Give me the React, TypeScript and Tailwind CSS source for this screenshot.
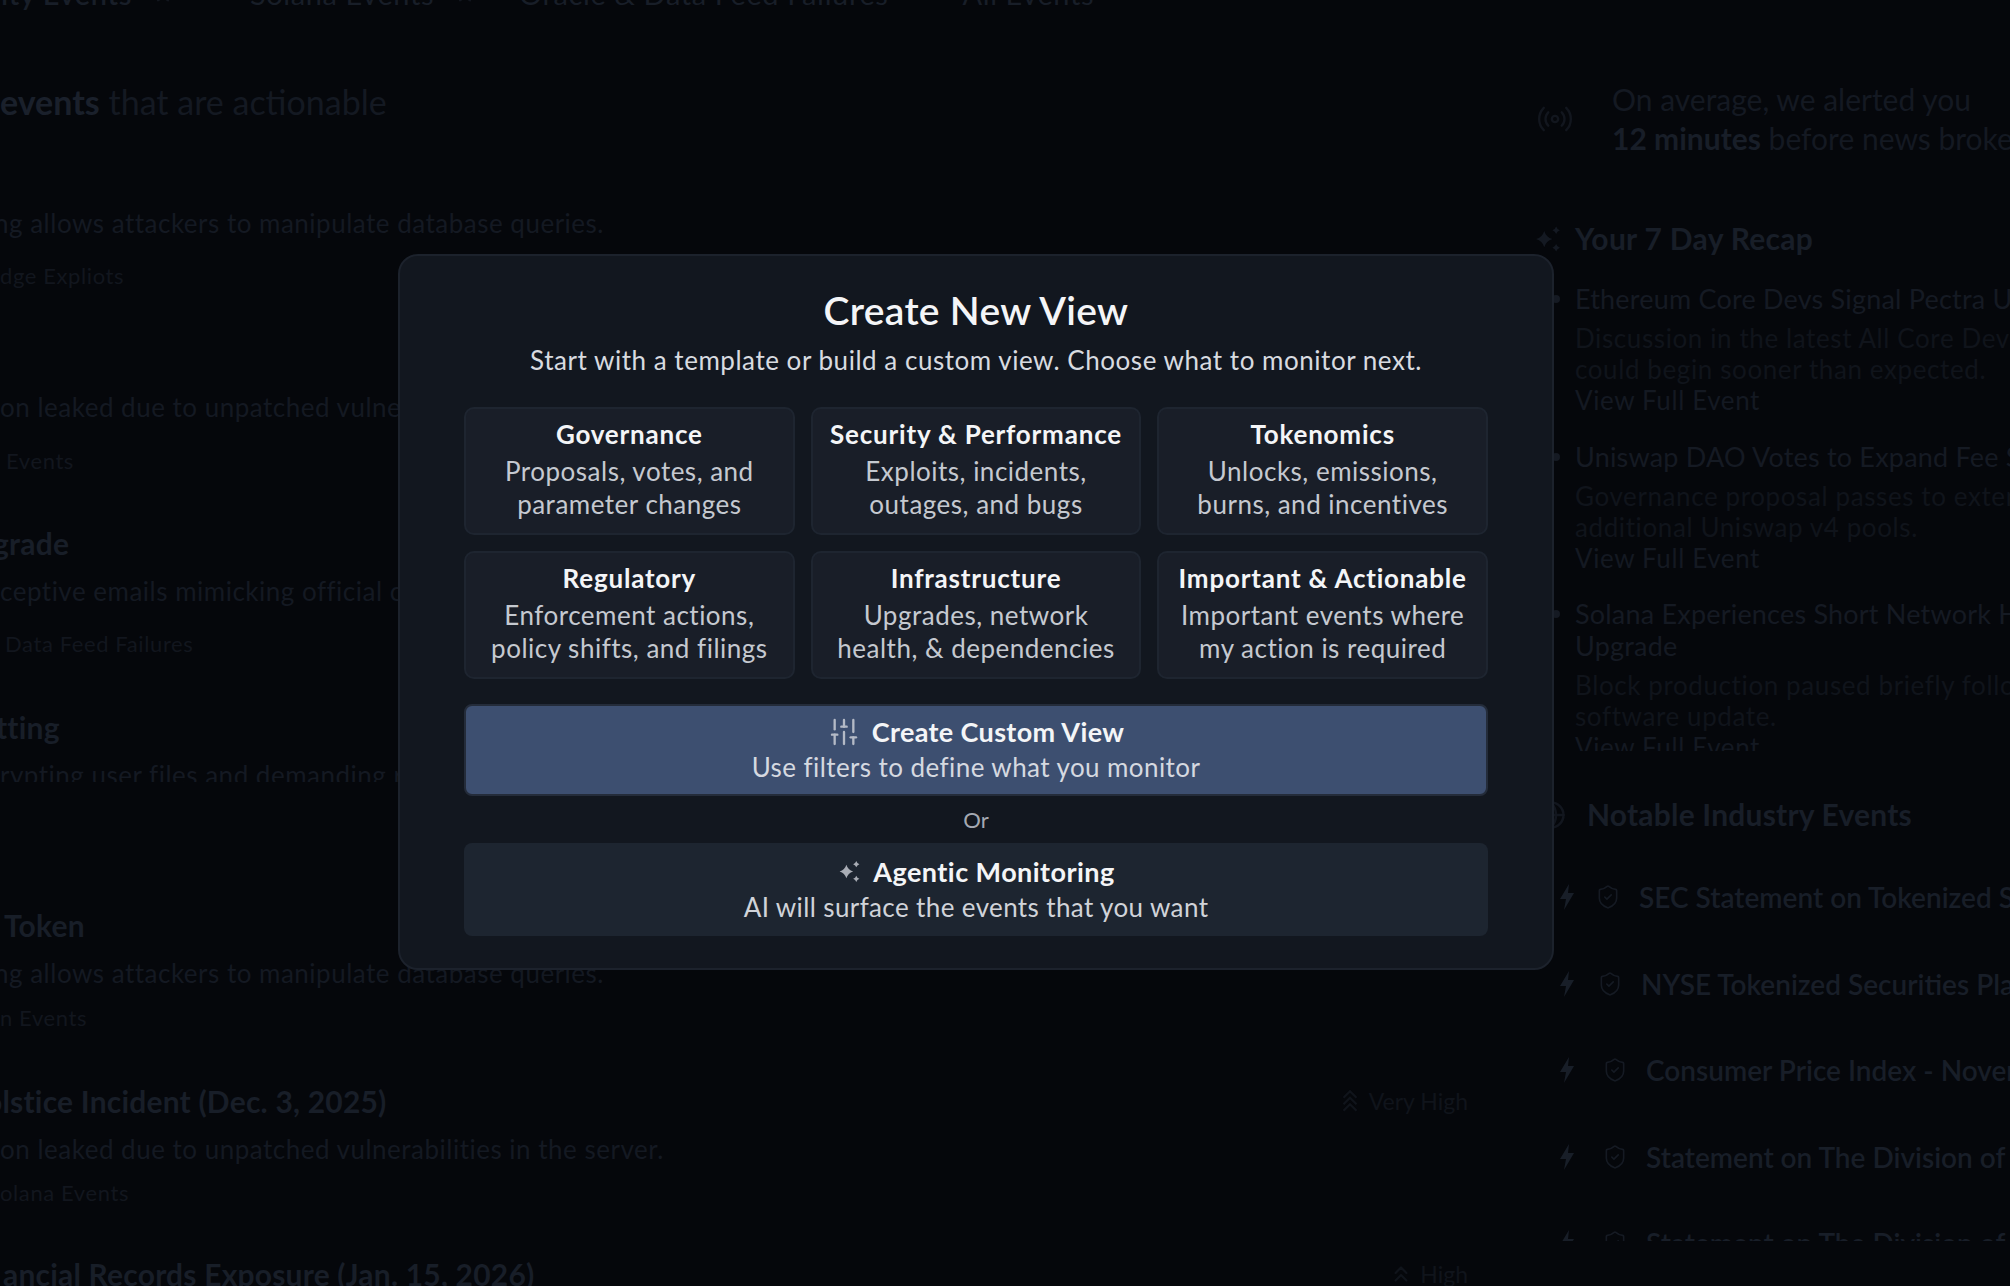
import { ChevronsUp, Globe, Radio, ShieldCheck, SlidersVertical, Bookmark, Plus } from "lucide-react";

function Sparkle({ className }: { className?: string }) {
  return (
    <svg viewBox="0 0 24 24" fill="currentColor" className={className}>
      <path d="M9 5.500Q10.500 10.500 15.500 12 10.500 13.500 9 18.500 7.500 13.500 2.500 12 7.500 10.500 9 5.500z" />
      <path d="M18.500 2Q19.200 4.300 21.500 5 19.200 5.700 18.500 8 17.800 5.700 15.500 5 17.800 4.300 18.500 2z" />
      <path d="M18.500 16Q19.200 18.300 21.500 19 19.200 19.700 18.500 22 17.800 19.700 15.500 19 17.800 18.300 18.500 16z" />
    </svg>
  );
}

function TripleChevron({ className }: { className?: string }) {
  return (
    <svg viewBox="0 0 24 24" fill="none" stroke="currentColor" strokeWidth="2" className={className}>
      <path d="M6 9l6-6 6 6M6 15l6-6 6 6M6 21l6-6 6 6" />
    </svg>
  );
}

function Bolt({ className }: { className?: string }) {
  return (
    <svg viewBox="0 0 14 26" fill="currentColor" className={className}>
      <path d="M9 0L0 15h6L4 26l10-17H8z" />
    </svg>
  );
}

const templates = [
  { title: "Governance", lines: ["Proposals, votes, and", "parameter changes"] },
  { title: "Security & Performance", lines: ["Exploits, incidents,", "outages, and bugs"] },
  { title: "Tokenomics", lines: ["Unlocks, emissions,", "burns, and incentives"] },
  { title: "Regulatory", lines: ["Enforcement actions,", "policy shifts, and filings"] },
  { title: "Infrastructure", lines: ["Upgrades, network", "health, & dependencies"] },
  { title: "Important & Actionable", lines: ["Important events where", "my action is required"] },
];

function EventRow({
  height,
  title,
  titleShift = "",
  desc,
  descShift = "",
  tag,
  tagShift = "mt-[21px]",
  severity,
  clampDesc,
}: {
  height: string;
  title?: string;
  titleShift?: string;
  desc: string;
  descShift?: string;
  tag?: string;
  tagShift?: string;
  severity?: React.ReactNode;
  clampDesc?: boolean;
}) {
  return (
    <div className={`flex flex-col shrink-0 ${height}`}>
      <div className="flex justify-between items-center h-[36px] pr-[42px]">
        <span className={`text-[30px] tracking-[0.2px] font-bold text-[#181e28] whitespace-nowrap ${titleShift}`}>{title}</span>
        {severity}
      </div>
      <div className={`mt-[12px] text-[26px] tracking-[0.5px] leading-[36px] text-[#141922] whitespace-nowrap ${descShift} ${clampDesc ? "h-[25px] overflow-hidden" : ""}`}>
        {desc}
      </div>
      {tag && (
        <div className={`text-[22px] tracking-[0.6px] leading-[28px] text-[#12161e] whitespace-nowrap ${tagShift}`}>{tag}</div>
      )}
    </div>
  );
}

function RecapItem({ title, body }: { title: string[]; body: string[] }) {
  return (
    <div className="flex flex-col">
      <div className="relative text-[27px] tracking-[0.2px] leading-[32px] text-[#151a23] whitespace-nowrap">
        <span className="absolute left-[-23px] top-[12px] w-[8px] h-[8px] rounded-full bg-[#151a23]" />
        {title.map((t) => (
          <div key={t}>{t}</div>
        ))}
      </div>
      <div className="mt-[8px] text-[26px] tracking-[0.6px] leading-[31px] text-[#10141b] whitespace-nowrap">
        {body.map((t) => (
          <div key={t}>{t}</div>
        ))}
      </div>
      <div className="text-[26px] tracking-[0.6px] leading-[30px] text-[#141922] whitespace-nowrap">View Full Event</div>
    </div>
  );
}

function NotableRow({ title, shieldGap }: { title: string; shieldGap: string }) {
  return (
    <div className="flex items-center h-[86.5px] shrink-0 text-[#181e28] whitespace-nowrap">
      <Bolt className="w-[14px] h-[26px] ml-[24px] shrink-0 text-[#181e28]" />
      <ShieldCheck className={`w-[26px] h-[26px] shrink-0 text-[#151a23] ${shieldGap}`} strokeWidth={1.5} />
      <span className="ml-[18px] text-[28px] font-semibold">{title}</span>
    </div>
  );
}

export default function App() {
  return (
    <div className="relative w-[2010px] h-[1286px] overflow-hidden bg-[#05070b] font-['Lato',sans-serif]">
      <div className="flex h-full">
        <div className="flex flex-col w-[1510px] shrink-0 overflow-hidden">
          <div className="flex items-center h-[36px] mt-[-24px] text-[29px] tracking-[0.6px] text-[#181e28] whitespace-nowrap">
            <span className="ml-[1px] font-semibold">ity Events</span>
            <Bookmark className="w-[18px] h-[18px] ml-[22px] shrink-0 text-[#12161e]" />
            <span className="ml-[78px]">Solana Events</span>
            <Bookmark className="w-[18px] h-[18px] ml-[22px] shrink-0 text-[#12161e]" />
            <span className="ml-[45px]">Oracle &amp; Data Feed Failures</span>
            <Plus className="w-[18px] h-[18px] ml-[22px] shrink-0 text-[#12161e]" />
            <span className="ml-[34px]">All Events</span>
          </div>
          <div className="mt-[70px] text-[34px] leading-[40px] text-[#141922] whitespace-nowrap">
            <span className="font-bold text-[#1a202b]">events</span> that are actionable
          </div>
          <div className="flex flex-col mt-[35px]">
            <EventRow height="h-[184px]" desc="ng allows attackers to manipulate database queries." descShift="ml-[-6px]" tag="dge Expliots" />
            <EventRow height="h-[184px]" desc="on leaked due to unpatched vulnerabilities in the server." tag="Events" tagShift="mt-[22px] ml-[6px]" />
            <EventRow height="h-[184px]" title="grade" titleShift="ml-[-7px]" desc="ceptive emails mimicking official communications." tag="Data Feed Failures" tagShift="mt-[21px] ml-[5px]" />
            <EventRow height="h-[198px]" title="tting" titleShift="ml-[-4px]" desc="rypting user files and demanding ransom." clampDesc />
            <EventRow height="h-[176px]" title="Token" titleShift="ml-[4px]" desc="ng allows attackers to manipulate database queries." descShift="ml-[-6px]" tag="n Events" tagShift="mt-[13px]" />
            <EventRow
              height="h-[173px]"
              title="olstice Incident (Dec. 3, 2025)"
              titleShift="ml-[-15px]"
              desc="on leaked due to unpatched vulnerabilities in the server."
              tag="olana Events"
              tagShift="mt-[12px]"
              severity={
                <span className="flex items-center gap-[6px] text-[23px] text-[#10141b]">
                  <TripleChevron className="w-[26px] h-[26px]" /> Very High
                </span>
              }
            />
            <EventRow
              height="h-[120px]"
              title="ancial Records Exposure (Jan. 15, 2026)"
              titleShift="ml-[3px]"
              desc=""
              severity={
                <span className="flex items-center gap-[6px] text-[23px] text-[#10141b]">
                  <ChevronsUp className="w-[26px] h-[26px]" /> High
                </span>
              }
            />
          </div>
        </div>

        <div className="flex flex-col flex-1 min-w-0 h-full overflow-hidden pt-[80px] pl-[26px]">
          <div className="flex items-center shrink-0">
            <Radio className="w-[38px] h-[38px] shrink-0 text-[#12161e]" strokeWidth={1.5} />
            <div className="ml-[38px] text-[30px] leading-[39px] text-[#141922] whitespace-nowrap">
              <div>On average, we alerted you</div>
              <div>
                <span className="font-bold text-[#181e28]">12 minutes</span> before news broke
              </div>
            </div>
          </div>
          <div className="flex items-center mt-[58px] shrink-0">
            <Sparkle className="w-[30px] h-[30px] shrink-0 text-[#141922] ml-[-3px]" />
            <span className="ml-[12px] text-[30px] tracking-[0.3px] font-bold text-[#181e28] whitespace-nowrap">Your 7 Day Recap</span>
          </div>
          <div className="flex flex-col gap-[25.5px] h-[468px] mt-[22px] shrink-0 overflow-hidden pl-[39px]">
            <RecapItem
              title={["Ethereum Core Devs Signal Pectra Upgrade"]}
              body={["Discussion in the latest All Core Devs call", "could begin sooner than expected."]}
            />
            <RecapItem
              title={["Uniswap DAO Votes to Expand Fee Switch"]}
              body={["Governance proposal passes to extend fees", "additional Uniswap v4 pools."]}
            />
            <RecapItem
              title={["Solana Experiences Short Network Halt", "Upgrade"]}
              body={["Block production paused briefly following", "software update."]}
            />
          </div>
          <div className="flex items-center mt-[41px] shrink-0">
            <Globe className="w-[30px] h-[30px] shrink-0 text-[#12161e]" />
            <span className="ml-[21px] text-[30px] tracking-[0.2px] font-bold text-[#181e28] whitespace-nowrap">Notable Industry Events</span>
          </div>
          <div className="flex flex-col mt-[17px] h-[387px] shrink-0 overflow-hidden">
            <NotableRow title="SEC Statement on Tokenized Securities" shieldGap="ml-[21px]" />
            <NotableRow title="NYSE Tokenized Securities Plan" shieldGap="ml-[23px]" />
            <NotableRow title="Consumer Price Index - November" shieldGap="ml-[28px]" />
            <NotableRow title="Statement on The Division of" shieldGap="ml-[28px]" />
            <NotableRow title="Statement on The Division of" shieldGap="ml-[28px]" />
          </div>
        </div>
      </div>

      <div className="absolute left-[398px] top-[254px] w-[1156px] h-[716px] rounded-[20px] border-2 border-[#1c222c] bg-[#12171f] px-[64px] pt-[31px] text-white">
        <h2 className="text-center text-[39px] tracking-[0.3px] leading-[46px] font-semibold text-[#f4f5f7]">Create New View</h2>
        <p className="mt-[9px] text-center text-[26px] tracking-[0.53px] leading-[36px] text-[#d8dbe0]">
          Start with a template or build a custom view. Choose what to monitor next.
        </p>
        <div className="grid grid-cols-3 gap-4 mt-[29px]">
          {templates.map((t) => (
            <div
              key={t.title}
              className="h-[128px] rounded-[10px] border-2 border-[#1e2530] bg-[#191e28] pt-[7px] flex flex-col items-center whitespace-nowrap"
            >
              <div className="text-[26px] tracking-[0.8px] leading-[36px] font-bold text-[#f4f5f7]">{t.title}</div>
              <div className="mt-[3px] text-[26px] tracking-[0.5px] leading-[33px] text-[#c5c9d0]">
                {t.lines.map((l) => (
                  <div key={l} className="text-center">{l}</div>
                ))}
              </div>
            </div>
          ))}
        </div>
        <div className="mt-[25px] h-[92px] rounded-[8px] border-2 border-[#242c3a] bg-[#3d4f70] flex flex-col items-center justify-center">
          <div className="flex items-center gap-[12px] mt-[-3px]">
            <SlidersVertical className="w-[32px] h-[32px] text-[#b4bac6]" strokeWidth={1.75} />
            <span className="text-[27px] tracking-[0.35px] leading-[36px] font-bold text-[#f4f5f7]">Create Custom View</span>
          </div>
          <div className="text-[26px] tracking-[0.42px] leading-[34px] text-[#d5d9e0]">Use filters to define what you monitor</div>
        </div>
        <div className="text-center text-[22px] leading-[47px] text-[#a4a9b2]">Or</div>
        <div className="h-[93px] rounded-[8px] bg-[#1d2530] flex flex-col items-center justify-center">
          <div className="flex items-center gap-[11px] mt-[-2px]">
            <Sparkle className="w-[25px] h-[25px] text-[#a9adb5]" />
            <span className="text-[27px] tracking-[0.45px] leading-[36px] font-bold text-[#f4f5f7]">Agentic Monitoring</span>
          </div>
          <div className="text-[26px] tracking-[0.38px] leading-[34px] text-[#d0d3d9]">AI will surface the events that you want</div>
        </div>
      </div>
    </div>
  );
}
